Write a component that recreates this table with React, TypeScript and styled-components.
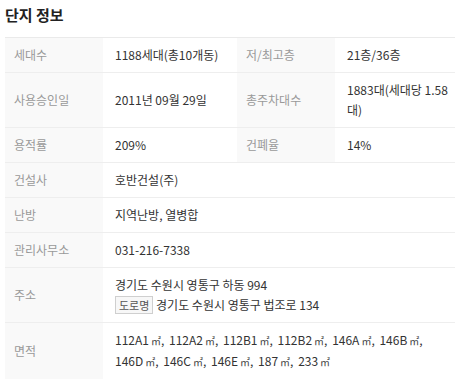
import { createGlobalStyle, styled } from 'styled-components';

const GlobalStyle = createGlobalStyle`
  body {
    margin: 0;
    background: #fff;
    font-family: 'Noto Sans CJK KR', 'Noto Sans', sans-serif;
  }
`;

const Section = styled.section`
  padding: 4px 11px 0 5px;
  color: #333;
`;

const Title = styled.h2`
  margin: 0 0 11px;
  font-size: 15px;
  font-weight: 700;
  line-height: 22px;
  color: #222;
`;

const Table = styled.div`
  display: flex;
  flex-direction: column;
  border-top: 1px solid #eaeaea;
`;

const Row = styled.div`
  display: grid;
  grid-template-columns: 98px 134px 98px 1fr;
  border-bottom: 1px solid #eeeeee;
`;

const Cell = styled.div<{ $wide?: boolean }>`
  display: grid;
  grid-column: ${p => (p.$wide ? 'span 4' : 'span 2')};
  grid-template-columns: 98px 1fr;
`;

const Label = styled.div`
  display: flex;
  align-items: center;
  padding: 7px 8px 7px 9px;
  background: #f9f9f9;
  font-size: 12px;
  line-height: 20px;
  color: #999;
`;

const Value = styled.div`
  display: flex;
  flex-direction: column;
  justify-content: center;
  padding: 7px 0 7px 12px;
  font-size: 12px;
  line-height: 20px;
  color: #333;
`;

const RoadBadge = styled.span`
  display: inline-block;
  padding: 0 3px;
  border: 1px solid #cfcfcf;
  background: #f7f7f7;
  font-size: 11px;
  line-height: 16px;
  color: #555;
`;

const AreaItem = styled.span`
  margin-right: 2px;
  white-space: nowrap;
`;

const Unit = styled.span`
  margin-left: 2px;
  font-size: 10px;
  color: #444;
`;

interface InfoCell {
  label: string;
  value: React.ReactNode;
}

const areas = [
  '112A1', '112A2', '112B1', '112B2', '146A', '146B',
  '146D', '146C', '146E', '187', '233',
];

const rows: InfoCell[][] = [
  [
    { label: '세대수', value: '1188세대(총10개동)' },
    { label: '저/최고층', value: '21층/36층' },
  ],
  [
    { label: '사용승인일', value: '2011년 09월 29일' },
    { label: '총주차대수', value: '1883대(세대당 1.58대)' },
  ],
  [
    { label: '용적률', value: '209%' },
    { label: '건폐율', value: '14%' },
  ],
  [{ label: '건설사', value: '호반건설(주)' }],
  [{ label: '난방', value: '지역난방, 열병합' }],
  [{ label: '관리사무소', value: '031-216-7338' }],
  [
    {
      label: '주소',
      value: (
        <>
          <div>경기도 수원시 영통구 하동 994</div>
          <div>
            <RoadBadge>도로명</RoadBadge> 경기도 수원시 영통구 법조로 134
          </div>
        </>
      ),
    },
  ],
  [
    {
      label: '면적',
      value: (
        <div>
          {areas.map((a, i) => (
            <span key={a}>
              <AreaItem>
                {a}
                <Unit>㎡</Unit>
                {i < areas.length - 1 ? ',' : ''}
              </AreaItem>{' '}
            </span>
          ))}
        </div>
      ),
    },
  ],
];

export default function App() {
  return (
    <>
      <GlobalStyle />
      <Section>
        <Title>단지 정보</Title>
        <Table>
          {rows.map((cells, i) => (
            <Row key={i}>
              {cells.map(cell => (
                <Cell key={cell.label} $wide={cells.length === 1}>
                  <Label>{cell.label}</Label>
                  <Value>{cell.value}</Value>
                </Cell>
              ))}
            </Row>
          ))}
        </Table>
      </Section>
    </>
  );
}
